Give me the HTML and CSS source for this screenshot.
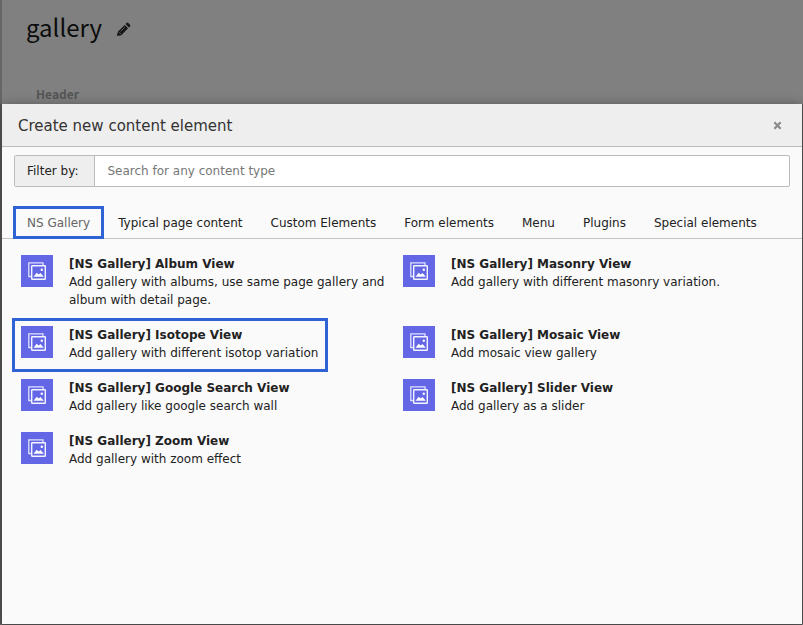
FILE: index.html
```html
<!DOCTYPE html>
<html lang="en">
<head>
<meta charset="utf-8">
<title>Create new content element</title>
<link rel="stylesheet" href="styles.css">
</head>
<body>
<svg class="sprite" aria-hidden="true">
  <symbol id="gallery-icon" viewBox="0 0 32 32">
    <rect width="32" height="32" fill="#6367e6"/>
    <path d="M10 21.500H7.800V7.800H22V10" fill="none" stroke="#dfe1ff" stroke-width="1.300"/>
    <rect x="10.700" y="10.700" width="13.600" height="13.600" rx=".5" fill="none" stroke="#f4f4ff" stroke-width="1.400"/>
    <path d="M12.500 21.800l3.200-4 2 1.700 1.800-1.500 3.300 3.800z" fill="#fff"/>
    <circle cx="20.800" cy="14.800" r="1.200" fill="#fff"/>
  </symbol>
</svg>
<div class="page">
  <header class="page-head">
    <h1>gallery</h1>
    <button class="edit" type="button" aria-label="Edit page title">
      <svg viewBox="0 0 16 16"><path d="M1 15l1-4.600L9.300 3.100l3.600 3.600L5.600 14zM10.200 2.200l1.300-1.300q.7-.6 1.400 0l2.200 2.200q.6.700 0 1.400l-1.300 1.300z" fill="#151515"/><path d="M3.200 10.800l2 2M5 10l4.500-4.500" stroke="#777" stroke-width=".8"/></svg>
    </button>
  </header>
  <p class="column-label">Header</p>
  <main class="modal" role="dialog" aria-labelledby="modal-title">
    <div class="modal-head">
      <h2 id="modal-title">Create new content element</h2>
      <button class="close" type="button" aria-label="Close"><svg viewBox="0 0 10 10"><path d="M1.500 1.500l7 7M8.500 1.500l-7 7" stroke="#888" stroke-width="2.400"/></svg></button>
    </div>
    <div class="filter">
      <label for="filter">Filter by:</label>
      <input id="filter" type="text" placeholder="Search for any content type">
    </div>
    <nav class="tabs">
      <a class="active" href="#gallery">NS Gallery</a>
      <a href="#typical">Typical page content</a>
      <a href="#custom">Custom Elements</a>
      <a href="#form">Form elements</a>
      <a href="#menu">Menu</a>
      <a href="#plugins">Plugins</a>
      <a href="#special">Special elements</a>
    </nav>
    <div class="items" id="gallery">
      <a class="item" href="#album"><svg class="icon"><use href="#gallery-icon"/></svg><span><strong>[NS Gallery] Album View</strong>Add gallery with albums, use same page gallery and album with detail page.</span></a>
      <a class="item" href="#masonry"><svg class="icon"><use href="#gallery-icon"/></svg><span><strong>[NS Gallery] Masonry View</strong>Add gallery with different masonry variation.</span></a>
      <a class="item marked" href="#isotope"><svg class="icon"><use href="#gallery-icon"/></svg><span><strong>[NS Gallery] Isotope View</strong>Add gallery with different isotop variation</span></a>
      <a class="item" href="#mosaic"><svg class="icon"><use href="#gallery-icon"/></svg><span><strong>[NS Gallery] Mosaic View</strong>Add mosaic view gallery</span></a>
      <a class="item" href="#search"><svg class="icon"><use href="#gallery-icon"/></svg><span><strong>[NS Gallery] Google Search View</strong>Add gallery like google search wall</span></a>
      <a class="item" href="#slider"><svg class="icon"><use href="#gallery-icon"/></svg><span><strong>[NS Gallery] Slider View</strong>Add gallery as a slider</span></a>
      <a class="item" href="#zoom"><svg class="icon"><use href="#gallery-icon"/></svg><span><strong>[NS Gallery] Zoom View</strong>Add gallery with zoom effect</span></a>
    </div>
  </main>
</div>
</body>
</html>
```
FILE: styles.css
```css
* { box-sizing: border-box; }

body {
  margin: 0;
  background: #808080;
  color: #222;
  font: 12px/18px Verdana, "DejaVu Sans", sans-serif;
}

h1, h2, p { margin: 0; font-weight: 400; }

a { color: inherit; text-decoration: none; }

button { padding: 0; border: 0; background: none; }

button svg { display: block; width: 100%; height: 100%; }

.sprite { position: absolute; width: 0; height: 0; }

.page {
  display: flex;
  flex-direction: column;
  min-height: 100vh;
  padding: 0 1px 1px 0;
  border-left: 2px solid #666;
}

.page-head {
  display: flex;
  align-items: center;
  gap: 14px;
  padding: 9px 24px 0;
}

h1 {
  color: #0c0c0c;
  font: 24px/36px "Source Sans Pro", "Noto Sans CJK SC", sans-serif;
}

.edit { width: 15px; height: 15px; margin-top: 4px; }

.column-label {
  padding: 40px 34px 1px;
  color: #555;
  font: 700 12px/18px "Source Sans Pro", "Noto Sans CJK SC", sans-serif;
}

.modal {
  flex: 1;
  background: #fafafa;
  box-shadow: 0 0 10px rgba(0, 0, 0, .3), -2px 0 #555, 1px 0 #555, 0 1px #555;
  clip-path: inset(-12px -2px -2px -2px);
}

.modal-head {
  display: flex;
  align-items: center;
  justify-content: space-between;
  height: 43px;
  padding: 0 20px 0 16px;
  border-bottom: 1px solid #bbb;
  background: #eee;
}

h2 { padding-top: 2px; color: #333; font-size: 15px; }

.close { width: 9px; height: 9px; }

.filter {
  display: flex;
  height: 32px;
  margin: 8px 12px 0;
  border: 1px solid #bbb;
  border-radius: 2px;
  background: #fff;
}

.filter label {
  padding: 6px 16px 6px 12px;
  border-right: 1px solid #bbb;
  background: #eee;
}

.filter input {
  flex: 1;
  min-width: 0;
  padding: 0 12px;
  border: 0;
  background: none;
  color: #222;
  font: inherit;
}

.filter input::placeholder { color: #777; opacity: 1; }

.tabs {
  display: flex;
  margin-top: 19px;
  padding: 0 11px;
  border-bottom: 1px solid #c4c4c4;
}

.tabs a {
  position: relative;
  padding: 8px 14px 6px;
  white-space: nowrap;
}

.tabs .active { color: #666; }

.tabs .active::after,
.marked::after {
  position: absolute;
  border: 3px solid #2f62d4;
  content: "";
}

.tabs .active::after { inset: 0 0 -1px 0; }

.items {
  display: grid;
  grid-template-columns: 1fr 1fr;
  gap: 17px 16px;
  padding: 16px 33px 16px 19px;
}

.item {
  position: relative;
  display: flex;
  gap: 16px;
  width: fit-content;
}

.icon { flex: none; width: 32px; height: 32px; }

.item strong { display: block; }

.marked::after { inset: -8px -10px -10px -9px; }
```
